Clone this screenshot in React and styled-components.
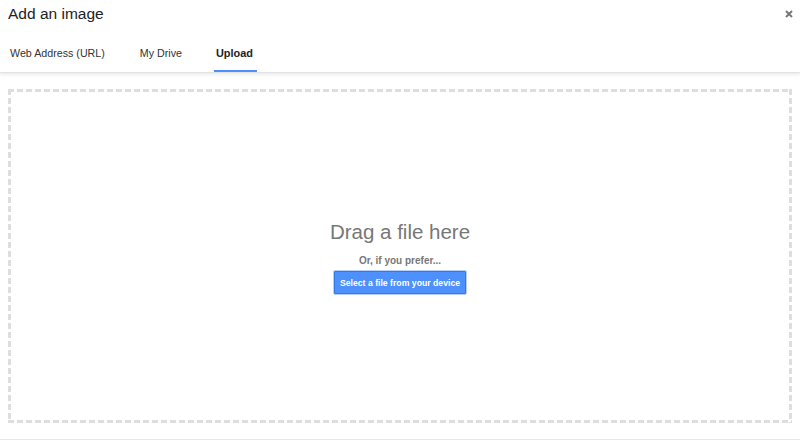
import React from "react";
import styled, { createGlobalStyle } from "styled-components";

const Global = createGlobalStyle`
  html, body {
    margin: 0;
    padding: 0;
    background: #fff;
    font-family: Arial, "Liberation Sans", sans-serif;
  }
`;

const Dialog = styled.div`
  width: 800px;
  height: 443px;
  display: flex;
  flex-direction: column;
  background: #fff;
  overflow: hidden;
`;

const Header = styled.div`
  height: 73px;
  box-sizing: border-box;
  display: flex;
  flex-direction: column;
  border-bottom: 1px solid #e3e3e3;
  box-shadow: 0 2px 3px rgba(0, 0, 0, 0.08);
  position: relative;
  z-index: 1;
`;

const TitleRow = styled.div`
  display: flex;
  align-items: flex-start;
  justify-content: space-between;
  padding: 5px 7px 0 8px;
  height: 34px;
  box-sizing: border-box;
`;

const Title = styled.div`
  font-size: 15.5px;
  color: #222;
`;

const Close = styled.button`
  border: none;
  background: none;
  padding: 0;
  margin-top: 5px;
  width: 8px;
  height: 8px;
  cursor: pointer;
  display: flex;
`;

const Tabs = styled.div`
  display: flex;
  flex: 1;
  padding-left: 7px;
  gap: 29px;
`;

const Tab = styled.div`
  display: flex;
  align-items: center;
  font-size: ${(p) => (p.$active ? 10.9 : 10.7)}px;
  color: ${(p) => (p.$active ? "#222" : "#333")};
  font-weight: ${(p) => (p.$active ? "bold" : "normal")};
  border-bottom: 2px solid ${(p) => (p.$active ? "#4d90fe" : "transparent")};
  padding: 1px ${(p) => (p.$active ? 4 : 3)}px 0 ${(p) => (p.$active ? 2 : 3)}px;
`;

const Body = styled.div`
  flex: 1;
  padding: 16px 8px 16px 8px;
  display: flex;
`;

const dash = "#dedede";

const DropZone = styled.div`
  flex: 1;
  display: flex;
  flex-direction: column;
  align-items: center;
  justify-content: center;
  background-image:
    repeating-linear-gradient(90deg, ${dash} 0 6px, transparent 6px 9px),
    repeating-linear-gradient(90deg, ${dash} 0 6px, transparent 6px 9px),
    repeating-linear-gradient(180deg, ${dash} 0 6px, transparent 6px 9px),
    repeating-linear-gradient(180deg, ${dash} 0 6px, transparent 6px 9px);
  background-size: 100% 3px, 100% 3px, 3px 100%, 3px 100%;
  background-position: left top, left bottom, left top, right top;
  background-repeat: no-repeat;
  padding-top: 2px;
`;

const DragText = styled.div`
  font-size: 20.5px;
  color: #777;
  margin-bottom: 11px;
`;

const Prefer = styled.div`
  font-size: 10px;
  font-weight: bold;
  color: #777;
  margin-bottom: 5px;
`;

const SelectButton = styled.button`
  font-family: inherit;
  font-size: 8.7px;
  font-weight: bold;
  color: #fff;
  background: #4d90fe;
  border: 1px solid #3079ed;
  box-shadow: 0 0 0 1px #b9d0f7;
  border-radius: 1px;
  height: 23px;
  padding: 0 5px;
  cursor: pointer;
`;

const Footer = styled.div`
  height: 3px;
  border-top: 1px solid #e8e8e8;
`;

export default function App() {
  return (
    <Dialog>
      <Global />
      <Header>
        <TitleRow>
          <Title>Add an image</Title>
          <Close aria-label="Close">
            <svg width="8" height="8" viewBox="0 0 8 8">
              <path d="M1 1L7 7M7 1L1 7" stroke="#777" strokeWidth="2" />
            </svg>
          </Close>
        </TitleRow>
        <Tabs>
          <Tab>Web Address (URL)</Tab>
          <Tab>My Drive</Tab>
          <Tab $active>Upload</Tab>
        </Tabs>
      </Header>
      <Body>
        <DropZone>
          <DragText>Drag a file here</DragText>
          <Prefer>Or, if you prefer...</Prefer>
          <SelectButton>Select a file from your device</SelectButton>
        </DropZone>
      </Body>
      <Footer />
    </Dialog>
  );
}
